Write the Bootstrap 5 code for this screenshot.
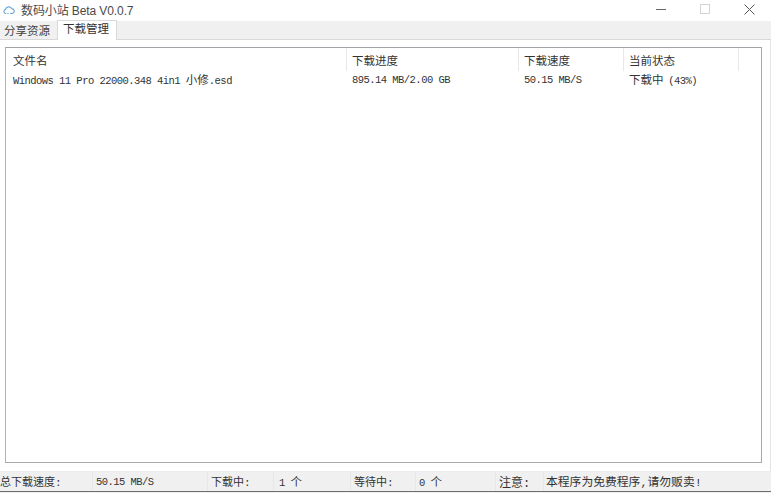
<!DOCTYPE html>
<html lang="zh">
<head>
<meta charset="utf-8">
<title>数码小站</title>
<link href="https://cdn.jsdelivr.net/npm/bootstrap@5.3.0/dist/css/bootstrap.min.css" rel="stylesheet">
<style>
html,body{height:493px;overflow:hidden;background:#f0f0f0}
body{font-family:"Liberation Sans","Noto Sans CJK SC",sans-serif;font-size:12px;color:#222;line-height:1}
.win-title{height:21px;background:#fff;font-size:12px;color:#4a4a4a}
.win-title svg{display:block}
.title-text{letter-spacing:-.1px}
.app-logo{margin:0 6px 0 3px}
.win-btn{width:44px;height:21px;padding-bottom:3px}
.win-strip{height:19px;background:#f0f0f0;border-bottom:1px solid #d9d9d9;padding-left:1px}
.strip-tab{font-size:11.5px;height:18px;padding:5px 3px 0;color:#444;width:56px}
.strip-tab.on{background:#fff;border:1px solid #d9d9d9;border-bottom:0;height:20px;width:60px;margin-top:-1px;padding:3px 0 0 5px;color:#333}
.work-area{height:431px;background:#fff;padding:7px 8px 8px 5px;border-right:1px solid #e4e4e4}
.file-box{height:416px;border:1px solid #a8a8ad;border-left-color:#b4b4b8;border-top-color:#a0a0a6;background:#fff}
.col-a{width:341px}
.col-b{width:172px}
.col-c{width:105px}
.col-d{width:115px}
.head-row{height:25px;color:#333;font-size:11.5px}
.head-row>div{height:23px;padding:8px 0 0 5px;border-right:1px solid #e8e8e8}
.head-row>.col-a{padding-left:7px}
.data-row{height:16px;font-family:"Liberation Mono","Noto Sans CJK SC",monospace;font-size:10.5px;color:#333;letter-spacing:-.54px}
.data-row>div{padding:2px 0 0 5px;white-space:nowrap}
.data-row>.col-a{padding-left:7px}
.cjk{font-size:11.5px;letter-spacing:0;font-family:"Liberation Sans","Noto Sans CJK SC",sans-serif}
.tight{margin-left:-1px}
.punct{font-family:"Liberation Mono",monospace}
.status-line{height:21px;border-bottom:1px solid #6e6e6e;color:#333;white-space:nowrap;border-top:1px solid #ececec}
.status-line>div{height:19px;padding-top:5px;border-right:1px solid #e6e6e6}
.mono{font-family:"Liberation Mono","Noto Sans CJK SC",monospace;font-size:10.5px;letter-spacing:-.54px;padding-top:5px!important}
.s1{width:93px;overflow:hidden;font-size:11px}.s2{width:115px;padding-left:3px}.s3{width:66px;padding-left:3px;font-size:11px}.s4{width:77px;padding-left:5px}.s5{width:65px;padding-left:3px;font-size:11px}.s6{width:80px;padding-left:3px}.s7{width:48px;padding-left:3px}.s8{flex:1;padding-left:2px;border-right:0!important;font-size:11.8px}
</style>
</head>
<body class="m-0">
<div class="win-title d-flex align-items-center">
  <svg class="app-logo" width="12" height="11" viewBox="0 0 12 11" fill="none" stroke="#6fa8dc" stroke-width="1.2"><path d="M3 8.5H2.6A2.1 2.1 0 0 1 2.6 4.4 3.2 3.2 0 0 1 8.6 3.6 2.5 2.5 0 0 1 9.4 8.5H7"/><path d="M3.5 8.5h2.5" stroke="#a9cbea"/></svg>
  <span class="flex-grow-1 title-text">数码小站 Beta V0.0.7</span>
  <div class="win-btn d-flex align-items-center justify-content-center"><svg width="10" height="10" viewBox="0 0 10 10"><path d="M0 5.5h10" stroke="#666" stroke-width="1"/></svg></div>
  <div class="win-btn d-flex align-items-center justify-content-center"><svg width="10" height="10" viewBox="0 0 10 10"><rect x=".5" y=".5" width="9" height="9" fill="none" stroke="#d4d4d4"/></svg></div>
  <div class="win-btn d-flex align-items-center justify-content-center"><svg width="11" height="11" viewBox="0 0 11 11"><path d="M.5.5l10 10M10.5.5l-10 10" stroke="#555" stroke-width="1"/></svg></div>
</div>
<div class="win-strip d-flex align-items-start">
  <div class="strip-tab">分享资源</div>
  <div class="strip-tab on">下载管理</div>
</div>
<div class="work-area">
  <div class="file-box">
    <div class="head-row d-flex">
      <div class="col-a">文件名</div>
      <div class="col-b">下载进度</div>
      <div class="col-c">下载速度</div>
      <div class="col-d">当前状态</div>
    </div>
    <div class="data-row d-flex">
      <div class="col-a">Windows 11 Pro 22000.348 4in1 <span class="cjk">小修</span>.esd</div>
      <div class="col-b">895.14 MB/2.00 GB</div>
      <div class="col-c">50.15 MB/S</div>
      <div class="col-d"><span class="cjk">下载中</span> <span class="tight">(43%)</span></div>
    </div>
  </div>
</div>
<div class="status-line d-flex">
  <div class="s1">总下载速度<span class="punct">:</span></div>
  <div class="s2 mono">50.15 MB/S</div>
  <div class="s3">下载中<span class="punct">:</span></div>
  <div class="s4 mono">1 <span class="cjk">个</span></div>
  <div class="s5">等待中<span class="punct">:</span></div>
  <div class="s6 mono">0 <span class="cjk">个</span></div>
  <div class="s7">注意<span class="punct">:</span></div>
  <div class="s8">本程序为免费程序<span class="punct">,</span>请勿贩卖<span class="punct">!</span></div>
</div>
<script src="https://cdn.jsdelivr.net/npm/bootstrap@5.3.0/dist/js/bootstrap.bundle.min.js"></script>
</body>
</html>
